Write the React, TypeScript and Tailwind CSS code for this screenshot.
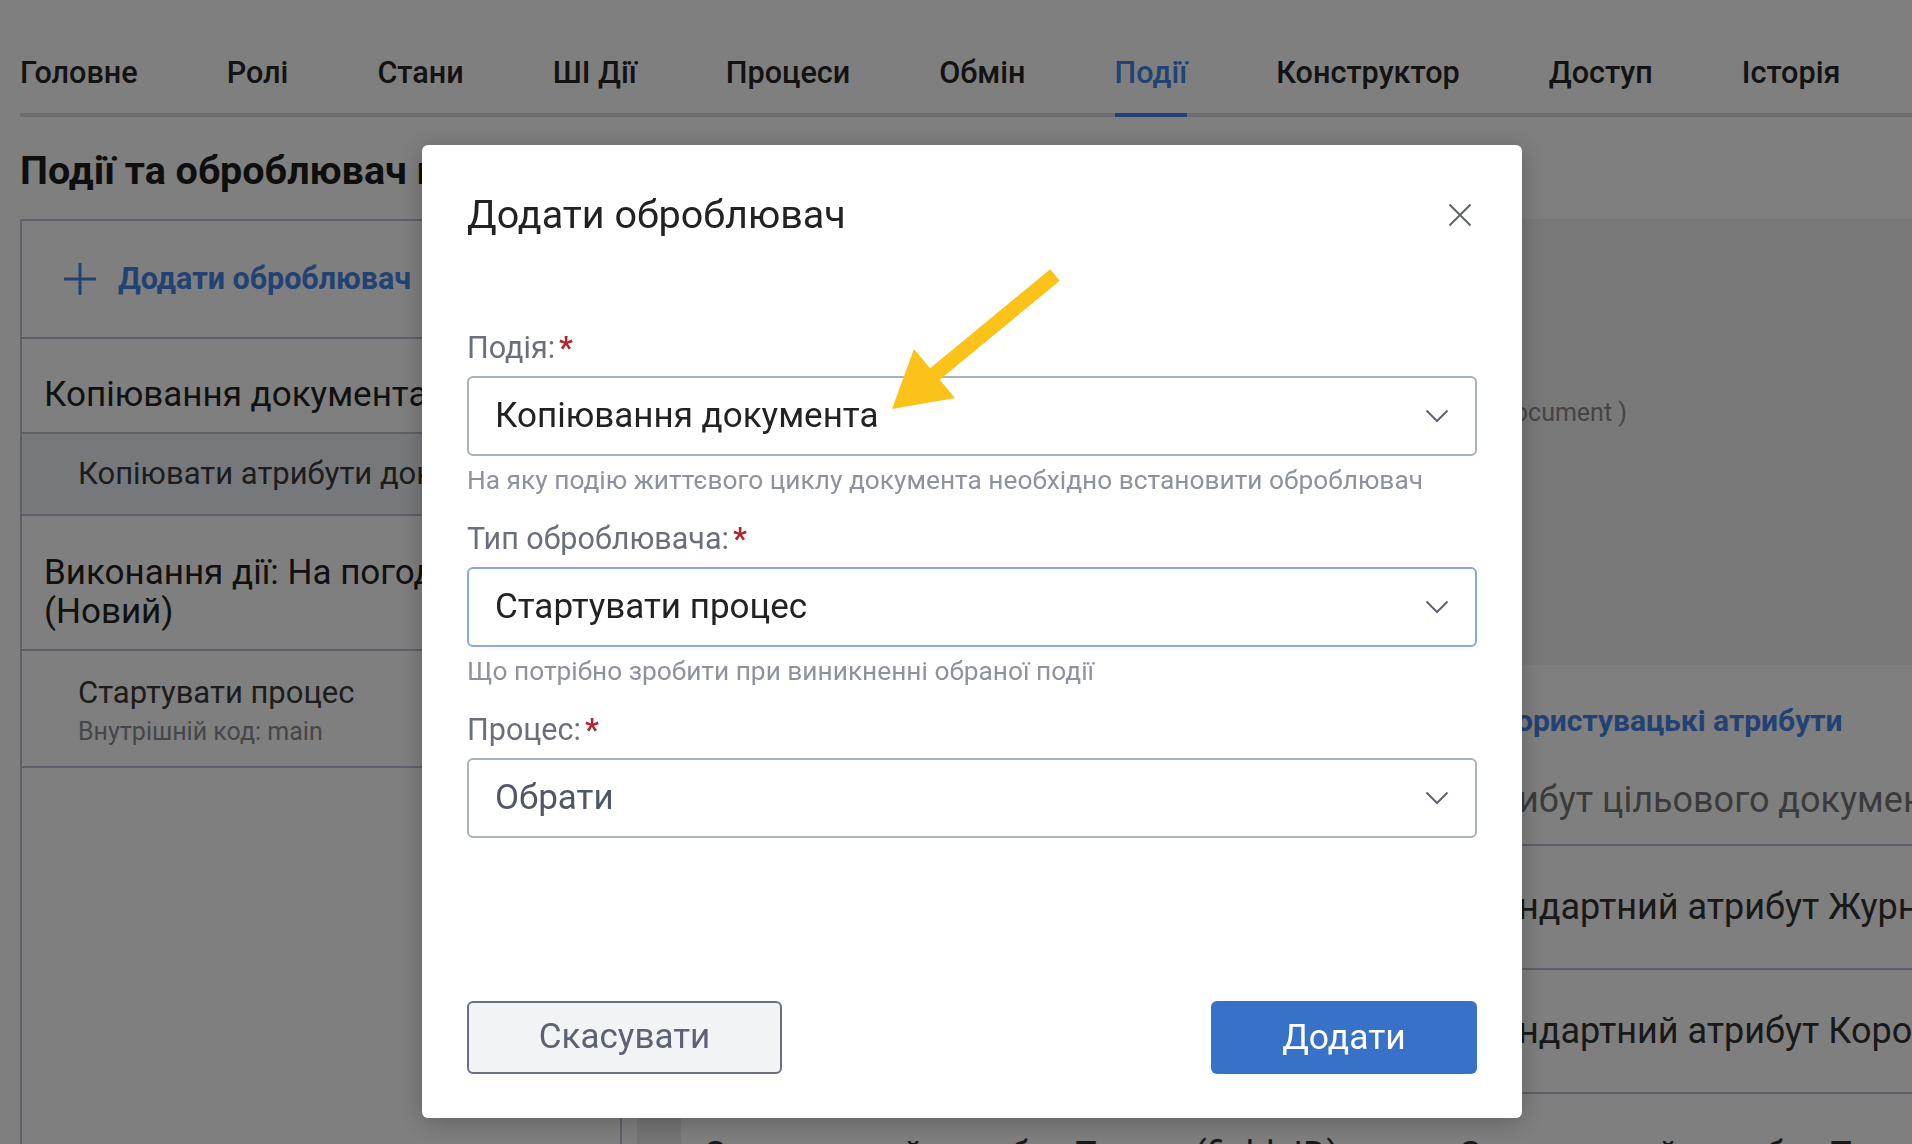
import React from "react";

const tabs = ["Головне", "Ролі", "Стани", "ШІ Дії", "Процеси", "Обмін", "Події", "Конструктор", "Доступ", "Історія"];

const Chevron = () => (
  <svg width="24" height="14" viewBox="0 0 24 14" fill="none" className="shrink-0">
    <polyline points="1.5,1.5 12,12 22.5,1.5" stroke="#5f6470" strokeWidth="2" />
  </svg>
);

const Field = ({
  label,
  value,
  hint,
  focused,
  placeholder,
  className,
}: {
  label: string;
  value: string;
  hint?: string;
  focused?: boolean;
  placeholder?: boolean;
  className?: string;
}) => (
  <div className={className}>
    <div className="h-[36px] text-[30.5px] leading-[36px] text-[#6b6f7b]">
      {label}
      <span className="ml-[4px] font-bold text-[#b3262b]">*</span>
    </div>
    <div
      className={
        focused
          ? "mt-[10px] flex h-[80px] items-center justify-between rounded-[6px] border-2 border-[#86a9de] pl-[26px] pr-[26px]"
          : "mt-[10px] flex h-[80px] items-center justify-between rounded-[6px] border-2 border-[#aab1bf] pl-[26px] pr-[26px]"
      }
    >
      <span className={placeholder ? "text-[35px] text-[#525766]" : "text-[35px] text-[#222222]"}>{value}</span>
      <Chevron />
    </div>
    {hint && <div className="mt-[8px] whitespace-nowrap text-[26.3px] leading-[32px] text-[#8e929c]">{hint}</div>}
  </div>
);

const rows = [
  ["Стандартний атрибут Журнал (journalID)", "Стандартний атрибут Журнал"],
  ["Стандартний атрибут Короткий опис (shortDescription)", "Стандартний атрибут Короткий опис"],
  ["Стандартний атрибут Пошта (fieldsID)", "Стандартний атрибут Пошта"],
];

export default function App() {
  return (
    <div className="relative h-[1144px] w-[1912px] overflow-hidden bg-white font-['Roboto',sans-serif]">
      {/* Tabs */}
      <div className="ml-[20px] flex gap-[89px] border-b-4 border-[#dcdde2] pt-[55px]">
        {tabs.map((t) => (
          <div
            key={t}
            className={
              t === "Події"
                ? "-mb-[4px] whitespace-nowrap border-b-4 border-[#4585e6] pb-[22px] text-[30.6px] font-medium leading-[36px] text-[#4585e6]"
                : "whitespace-nowrap pb-[22px] text-[30.6px] font-medium leading-[36px] text-[#262626]"
            }
          >
            {t}
          </div>
        ))}
      </div>

      <h1 className="ml-[20px] mt-[32px] whitespace-nowrap text-[39.5px] font-bold leading-[44px] text-[#1c1c1c]">
        Події та оброблювач подій
      </h1>

      <div className="ml-[20px] mt-[26px] flex gap-[15px]">
        {/* Left list */}
        <div className="h-[1000px] w-[602px] shrink-0 overflow-hidden border-2 border-[#bcc3d3]">
          <div className="flex h-[118px] items-center gap-[21px] border-b-2 border-[#bcc3d3] pl-[41px]">
            <svg width="34" height="34" viewBox="0 0 34 34" fill="none">
              <path d="M17 1v32M1 17h32" stroke="#4585e6" strokeWidth="3" />
            </svg>
            <span className="whitespace-nowrap text-[30.5px] font-bold text-[#4585e6]">Додати оброблювач</span>
          </div>
          <div className="flex h-[95px] items-center border-b-2 border-[#bcc3d3] pl-[22px] pt-[18px]">
            <span className="whitespace-nowrap text-[35px] leading-[40px] text-[#222222]">Копіювання документа</span>
          </div>
          <div className="flex h-[82px] items-center border-b-2 border-[#bcc3d3] bg-[#eef1f7] pl-[56px]">
            <span className="whitespace-nowrap text-[31px] text-[#3a3a3a]">Копіювати атрибути документа</span>
          </div>
          <div className="flex h-[135px] items-center border-b-2 border-[#bcc3d3] pl-[22px] pr-[20px] pt-[18px]">
            <span className="text-[35px] leading-[39px] text-[#222222]">Виконання дії: На погодження (Новий)</span>
          </div>
          <div className="flex h-[117px] flex-col justify-center border-b-2 border-[#bcc3d3] pl-[56px] pt-[5px]">
            <span className="whitespace-nowrap text-[31px] leading-[36px] text-[#3a3a3a]">Стартувати процес</span>
            <span className="mt-[5px] whitespace-nowrap text-[25px] leading-[32px] text-[#8a8d96]">Внутрішній код: main</span>
          </div>
        </div>

        {/* Right details */}
        <div className="min-w-0 flex-1 overflow-hidden">
          <div className="h-[446px] bg-[#f3f3f5] pt-[176px]">
            <div className="w-[990px] whitespace-nowrap text-right text-[25px] leading-[36px] text-[#8a8a8a]">
              Подія: Копіювання документа ( copyDocument )
            </div>
          </div>
          <div className="flex">
            <div className="w-[44px] shrink-0 bg-[#ebebed]" />
            <div className="min-w-0 flex-1 pl-[22px]">
              <div className="flex pt-[38px] text-[30px] font-bold leading-[36px] text-[#4585e6]">
                <span className="w-[794px] shrink-0 whitespace-nowrap">Стандартні атрибути</span>
                <span className="whitespace-nowrap">Користувацькі атрибути</span>
              </div>
              <div className="flex border-b-2 border-[#b8bfd0] pb-[26px] pt-[43px] text-[36px] leading-[36px]">
                <span className="w-[755px] shrink-0 whitespace-nowrap text-[#777777]">Атрибут документа</span>
                <span className="whitespace-nowrap text-[#777777]">Атрибут цільового документа</span>
              </div>
              {rows.map(([a, b]) => (
                <div key={a} className="flex h-[124px] items-center border-b-2 border-[#b8bfd0] text-[36px] text-[#333333]">
                  <span className="w-[755px] shrink-0 overflow-hidden whitespace-nowrap pr-[20px]">{a}</span>
                  <span className="whitespace-nowrap">{b}</span>
                </div>
              ))}
            </div>
          </div>
        </div>
      </div>

      {/* Modal overlay */}
      <div className="fixed inset-0 bg-black/50 pl-[422px] pt-[145px]">
        <div className="flex h-[973px] w-[1100px] flex-col rounded-[6px] bg-white px-[45px] pb-[44px] shadow-[0_4px_24px_rgba(0,0,0,0.25)]">
          <div className="flex items-center justify-between pt-[46px]">
            <span className="text-[39.5px] leading-[48px] text-[#222222]">Додати оброблювач</span>
            <svg width="24" height="24" viewBox="0 0 24 24" fill="none" className="mr-[5px]">
              <path d="M1.5 1.5l21 21M22.5 1.5l-21 21" stroke="#5f636c" strokeWidth="2" />
            </svg>
          </div>

          <Field
            className="mt-[91px]"
            label="Подія:"
            value="Копіювання документа"
            hint="На яку подію життєвого циклу документа необхідно встановити оброблювач"
          />
          <Field
            className="mt-[25px]"
            label="Тип оброблювача:"
            value="Стартувати процес"
            focused
            hint="Що потрібно зробити при виникненні обраної події"
          />
          <Field className="mt-[25px]" label="Процес:" value="Обрати" placeholder />

          <div className="mt-auto flex items-center justify-between">
            <button className="h-[73px] w-[315px] rounded-[6px] border-2 border-[#6b7080] bg-[#f1f3f5] text-[35px] text-[#5d6272]">
              Скасувати
            </button>
            <button className="h-[73px] w-[266px] rounded-[6px] bg-[#3771c8] text-[35.5px] text-white">Додати</button>
          </div>
        </div>

        {/* Annotation arrow */}
        <svg className="pointer-events-none absolute inset-0" width="1912" height="1144" viewBox="0 0 1912 1144" fill="none">
          <line x1="1055" y1="275" x2="930" y2="378" stroke="#fbc21a" strokeWidth="15" />
          <polygon points="914,349 955,398 892,409" fill="#fbc21a" />
        </svg>
      </div>
    </div>
  );
}
